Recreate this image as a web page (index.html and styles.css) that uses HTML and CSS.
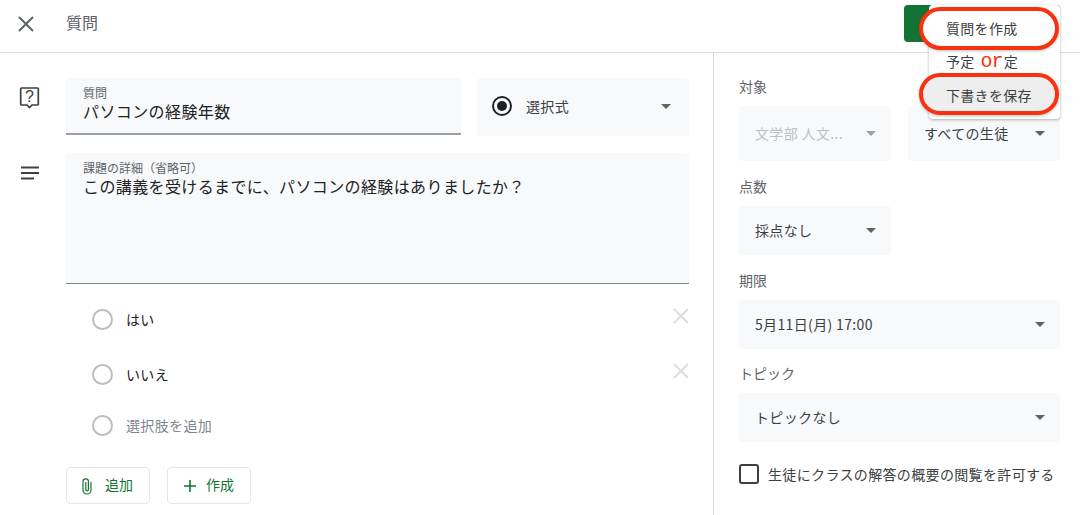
FILE: index.html
```html
<!DOCTYPE html>
<html lang="ja">
<head>
<meta charset="utf-8">
<title>質問</title>
<link rel="stylesheet" href="styles.css">
</head>
<body>
<header class="topbar">
  <svg class="close" width="24" height="24" viewBox="0 0 24 24"><path d="M5 5l14 14M19 5L5 19" stroke="#5f6368" stroke-width="2" fill="none"/></svg>
  <div class="title">質問</div>
  <div class="assign"></div>
</header>
<main class="main">
  <section class="left">
    <div class="row row-q">
      <div class="icon-col">
        <svg width="24" height="24" viewBox="0 0 24 24"><path d="M3.500 3h16a.8.800 0 0 1 .8.800v15.400a.8.800 0 0 1-.8.800h-5.500l-2.500 2.500-2.500-2.500h-5.500a.8.800 0 0 1-.8-.8V3.800a.8.800 0 0 1 .8-.8z" fill="none" stroke="#3c4043" stroke-width="1.700"/><text x="11.500" y="17" text-anchor="middle" class="qmark">?</text></svg>
      </div>
      <div class="field field-q">
        <div class="field-label">質問</div>
        <div class="field-value">パソコンの経験年数</div>
      </div>
      <div class="select select-type">
        <span class="radio-on"><span class="radio-dot"></span></span>
        <span class="select-text">選択式</span>
        <span class="caret"></span>
      </div>
    </div>
    <div class="row row-d">
      <div class="icon-col">
        <svg width="24" height="24" viewBox="0 0 24 24"><path d="M3 6.500h18M3 12h18M3 17.500h13" stroke="#3c4043" stroke-width="1.800" fill="none"/></svg>
      </div>
      <div class="field field-d">
        <div class="field-label">課題の詳細（省略可）</div>
        <div class="field-body">この講義を受けるまでに、パソコンの経験はありましたか？</div>
      </div>
    </div>
    <ul class="options">
      <li class="option"><span class="radio"></span><span class="opt-text">はい</span><svg class="remove" width="16" height="16" viewBox="0 0 16 16"><path d="M1 1l14 14M15 1L1 15" stroke="#dadce0" stroke-width="1.800" fill="none"/></svg></li>
      <li class="option"><span class="radio"></span><span class="opt-text">いいえ</span><svg class="remove" width="16" height="16" viewBox="0 0 16 16"><path d="M1 1l14 14M15 1L1 15" stroke="#dadce0" stroke-width="1.800" fill="none"/></svg></li>
      <li class="option option-add"><span class="radio"></span><span class="opt-text add-text">選択肢を追加</span></li>
    </ul>
    <div class="actions">
      <div class="btn btn-add">
        <svg width="18" height="18" viewBox="0 0 18 18"><path d="M13 5v8a4 4 0 0 1-8 0V4.500a2.700 2.700 0 0 1 5.400 0v8a1.300 1.300 0 0 1-2.600 0V5" fill="none" stroke="#137333" stroke-width="1.200"/></svg>
        <span>追加</span>
      </div>
      <div class="btn btn-make">
        <svg width="18" height="18" viewBox="0 0 18 18"><path d="M9 3v12M3 9h12" stroke="#137333" stroke-width="1.600" fill="none"/></svg>
        <span>作成</span>
      </div>
    </div>
  </section>
  <aside class="right">
    <div class="label label-first">対象</div>
    <div class="pair">
      <div class="select side side-tall disabled"><span class="select-text">文学部 人文...</span><span class="caret"></span></div>
      <div class="select side side-tall"><span class="select-text">すべての生徒</span><span class="caret"></span></div>
    </div>
    <div class="label">点数</div>
    <div class="select side half"><span class="select-text">採点なし</span><span class="caret"></span></div>
    <div class="label">期限</div>
    <div class="select side wide"><span class="select-text">5月11日(月) 17:00</span><span class="caret"></span></div>
    <div class="label label-tight">トピック</div>
    <div class="select side wide"><span class="select-text">トピックなし</span><span class="caret"></span></div>
    <label class="check"><span class="box"></span><span>生徒にクラスの解答の概要の閲覧を許可する</span></label>
  </aside>
</main>
<div class="menu">
  <div class="menu-item item-first"><span class="item-text">質問を作成</span></div>
  <div class="menu-item item-mid"><span>予定</span><span class="or">or</span><span>定</span></div>
  <div class="menu-item item-last"><span class="item-text">下書きを保存</span></div>
</div>
</body>
</html>
```

FILE: styles.css
```css
*, *::before { box-sizing: border-box; }
html, body { margin: 0; padding: 0; }
body {
  width: 1080px;
  height: 515px;
  overflow: hidden;
  position: relative;
  background: #fff;
  font-family: "Noto Sans CJK JP", "Noto Sans", sans-serif;
  color: #3c4043;
}
.topbar {
  height: 53px;
  border-bottom: 1px solid #dadce0;
  display: flex;
  align-items: center;
  padding: 0 20px 8px 14px;
}
.close { flex: none; margin-top: 4px; }
.title { margin: -1px 0 0 28px; font-size: 16px; color: #5f6368; line-height: 20px; }
.assign { margin-left: auto; width: 156px; height: 37px; background: #137333; border-radius: 4px; align-self: flex-start; margin-top: 5px; }
.main { display: flex; height: 462px; }
.left { width: 714px; border-right: 1px solid #dadce0; padding: 25px 24px 0 20px; flex: none; }
.row { display: flex; }
.icon-col { width: 46px; flex: none; }
.icon-col svg { display: block; margin-left: -2px; }
.row-q .icon-col { padding-top: 7px; }
.row-d .icon-col { padding-top: 8px; }
.field { background: #f8f9fa; border-radius: 4px 4px 0 0; border-bottom: 1px solid #80868b; padding: 8px 17px 0; }
.field-q { width: 395px; height: 57px; border-bottom-width: 2px; border-bottom-color: #9aa0a6; }
.field-label { font-size: 12px; line-height: 14px; color: #5f6368; }
.field-value { font-size: 16px; line-height: 24px; color: #202124; margin-top: -1px; letter-spacing: .4px; }
.select { background: #f8f9fa; border-radius: 4px; display: flex; align-items: center; }
.select-type { width: 212px; height: 58px; margin-left: 16px; padding: 0 18px 2px 15px; }
.select-text { font-size: 14px; line-height: 20px; white-space: nowrap; letter-spacing: .35px; margin-top: -2px; }
.select-type .select-text { margin-left: 14px; margin-top: 0; }
.radio-on { width: 20px; height: 20px; border: 2px solid #202124; border-radius: 50%; display: flex; align-items: center; justify-content: center; flex: none; }
.radio-dot { width: 10px; height: 10px; background: #202124; border-radius: 50%; }
.caret { margin-left: auto; width: 0; height: 0; border-left: 5px solid transparent; border-right: 5px solid transparent; border-top: 5px solid #5f6368; flex: none; }
.row-d { margin-top: 17px; }
.field-d { width: 623px; height: 131px; padding-top: 8px; }
.field-body { font-size: 16px; line-height: 23px; color: #202124; letter-spacing: .38px; }
.options { list-style: none; margin: 8px 0 0 72px; padding: 0; width: 597px; }
.option { display: flex; align-items: center; height: 55px; }
.option-add { height: 47px; }
.radio { width: 21px; height: 21px; border: 2px solid #bdbdbd; border-radius: 50%; flex: none; }
.opt-text { font-size: 14px; margin-left: 13px; color: #202124; line-height: 20px; letter-spacing: .35px; margin-top: -1px; }
.add-text { color: #80868b; }
.remove { margin-left: auto; margin-top: -8px; }
.actions { display: flex; gap: 17px; margin: 18px 0 0 46px; }
.btn { height: 37px; border: 1px solid #e4e6e9; border-radius: 4px; display: flex; align-items: center; font-size: 14px; color: #137333; line-height: 20px; padding-bottom: 3px; }
.btn svg { margin-top: 3px; }
.btn-add { width: 84px; padding-left: 11px; gap: 9px; }
.btn-make { width: 84px; padding-left: 13px; gap: 7px; }
.right { flex: 1; padding: 0 20px 0 25px; }
.label { font-size: 14px; line-height: 20px; color: #5f6368; margin-top: 15px; margin-bottom: 10px; }
.label-first { margin-top: 23px; }
.label-tight { margin-top: 14px; }
.pair { display: flex; gap: 17px; }
.side { padding: 0 15px 0 16px; height: 49px; }
.side-tall { width: 152px; height: 55px; }
.half { width: 152px; }
.wide { width: 321px; }
.disabled { color: #bdc1c6; }
.disabled .caret { border-top-color: #9aa0a6; }
.check { display: flex; align-items: center; gap: 9px; font-size: 14px; line-height: 20px; color: #3c4043; margin-top: 22px; letter-spacing: .35px; white-space: nowrap; }
.box { width: 20px; height: 20px; border: 2px solid #3c4043; border-radius: 3px; flex: none; }
.qmark { font-family: "Liberation Sans", sans-serif; font-size: 16px; fill: #3c4043; }
.menu {
  position: absolute; left: 929px; top: 5px; width: 131px; height: 114px;
  background: #fff; border-radius: 4px;
  box-shadow: 0 1px 3px rgba(60,64,67,.4);
  font-size: 14px; line-height: 20px;
}
.menu-item { position: relative; padding-left: 17px; color: #3c4043; white-space: nowrap; letter-spacing: .3px; }
.item-first { height: 45px; padding-top: 13px; }
.item-mid { height: 23px; display: flex; align-items: flex-start; padding-top: 1px; }
.item-last { height: 46px; padding-top: 12px; }
.item-text { position: relative; }
.item-first::before, .item-last::before {
  content: "";
  position: absolute;
  left: -10px;
  width: 140px;
  border: 4px solid #f8310f;
  border-radius: 22px;
  box-shadow: 0 1px 3px rgba(60,64,67,.35);
}
.item-first::before { top: 2px; height: 43px; background: #fff; }
.item-last::before { top: 0; height: 42px; background: #eeeeee; }
.or { font-family: "Liberation Mono", monospace; font-size: 20px; line-height: 20px; letter-spacing: -1px; color: #f8310f; margin: 1px 1px 0 6px; }
```
